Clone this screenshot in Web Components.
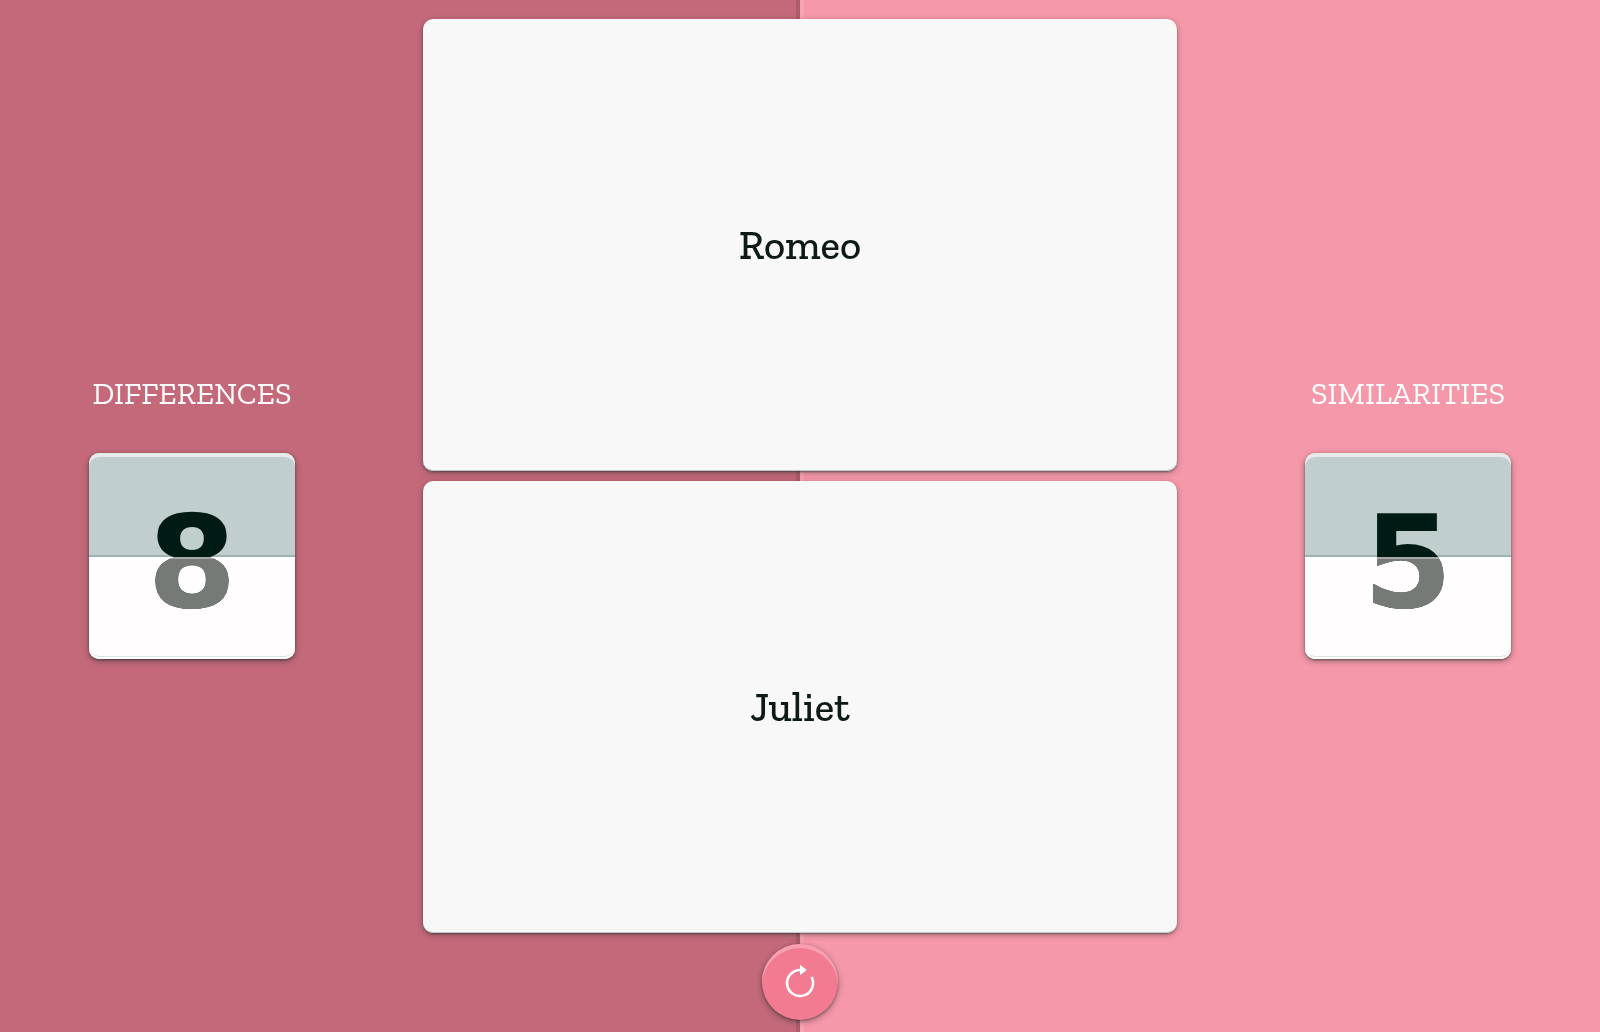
<!DOCTYPE html>
<html lang="en">
<head>
<meta charset="utf-8">
<meta name="viewport" content="width=device-width, initial-scale=1">
<title>Differences and similarities</title>
<style>
html, body { height: 100%; margin: 0; }
body { font-family: "Zilla Slab", "DejaVu Serif Condensed", "DejaVu Serif", serif; }
</style>
</head>
<body>
<compare-board>
  <tally-counter slot="left" label="DIFFERENCES" value="8"></tally-counter>
  <topic-card>Romeo</topic-card>
  <topic-card>Juliet</topic-card>
  <reset-button></reset-button>
  <tally-counter slot="right" label="SIMILARITIES" value="5"></tally-counter>
</compare-board>
<script>
class CompareBoard extends HTMLElement {
  constructor() {
    super();
    this.attachShadow({ mode: "open" }).innerHTML = `
      <style>
        :host {
          display: grid;
          grid-template-columns: 24% minmax(0, 1fr) 24%;
          min-height: 100vh;
          background: linear-gradient(to right,
            #c3697a calc(50% - 4px), #ad5d6e calc(50% - 4px) 50%,
            #f7a3b1 50% calc(50% + 4px), #f598a9 calc(50% + 4px));
        }
        .side { display: flex; flex-direction: column; justify-content: center; align-items: center; }
        main {
          display: flex; flex-direction: column; align-items: center; gap: 10px;
          box-sizing: border-box; padding: 19px 39px 12px;
        }
      </style>
      <section class="side"><slot name="left"></slot></section>
      <main><slot></slot></main>
      <section class="side"><slot name="right"></slot></section>`;
  }
}

class TopicCard extends HTMLElement {
  constructor() {
    super();
    this.attachShadow({ mode: "open" }).innerHTML = `
      <style>
        :host {
          display: flex; flex: 1; align-self: stretch; align-items: center; justify-content: center;
          border-radius: 10px; background: #f8f8f8;
          box-shadow: inset 0 -1px #bccbca, 0 1px 2px rgba(0, 26, 20, .4), 0 2px 6px rgba(0, 26, 20, .3);
        }
        h2 { margin: 0; font-size: 41px; line-height: 48px; font-weight: 500; color: #0d1a16; }
      </style>
      <h2><slot></slot></h2>`;
  }
}

class TallyCounter extends HTMLElement {
  constructor() {
    super();
    this.attachShadow({ mode: "open" }).innerHTML = `
      <style>
        :host { display: flex; flex-direction: column; align-items: center; gap: 38px; }
        label { font-size: 31px; line-height: 42px; font-weight: 400; color: #fff; }
        button {
          display: grid; width: 206px; height: 206px; padding: 0; border: 0; border-radius: 10px;
          overflow: hidden; cursor: pointer; background: linear-gradient(#e6eaea 50%, #fff 50%);
          box-shadow: 0 1px 2px rgba(0, 26, 20, .4), 0 2px 6px rgba(0, 26, 20, .4);
        }
        .value, .flap { grid-area: 1 / 1; }
        .value {
          box-sizing: border-box; height: 206px; padding-top: 14px; border-radius: 10px;
          background: linear-gradient(#c0cecd 102px, #9fb3b2 102px 104px, #fffdfe 104px);
          box-shadow: inset 0 4px #e6eaea, inset 0 -2px #fff, inset 0 -3px #dfe7e6;
          font: 700 128px/192px Verdana, "DejaVu Sans", sans-serif; color: #001a14;
        }
        /* lighten leaves the white half as it is and fades only the digit */
        .flap {
          align-self: end; height: 102px; mix-blend-mode: lighten;
          background: linear-gradient(#aaa5a6 2px, #757a76 2px);
        }
      </style>
      <label for="count"></label>
      <button id="count" type="button"><span class="value"></span><span class="flap"></span></button>`;
  }
  connectedCallback() {
    this.shadowRoot.querySelector("label").textContent = this.getAttribute("label");
    this.shadowRoot.querySelector(".value").textContent = this.getAttribute("value");
  }
}

class ResetButton extends HTMLElement {
  constructor() {
    super();
    this.attachShadow({ mode: "open" }).innerHTML = `
      <style>
        :host { display: block; padding-top: 1px; }
        button {
          display: grid; place-items: center; width: 76px; height: 76px; padding: 0; border: 0;
          border-radius: 50%; background: #f37b91; cursor: pointer;
          box-shadow: inset 0 4px #f8a0b0, 0 1px 2px rgba(0, 26, 20, .3), 0 2px 6px rgba(0, 26, 20, .4);
        }
        svg { display: block; width: 40px; height: 40px; }
      </style>
      <button type="button" aria-label="Reset">
        <svg viewBox="0 0 40 40" aria-hidden="true">
          <path d="M31.6 15A13 13 0 1 1 20.5 8" fill="none" stroke="#fff" stroke-width="2.6"/>
          <path d="M20 2.700v10.500l6.900-5.200z" fill="#fff"/>
        </svg>
      </button>`;
  }
}

customElements.define("compare-board", CompareBoard);
customElements.define("topic-card", TopicCard);
customElements.define("tally-counter", TallyCounter);
customElements.define("reset-button", ResetButton);
</script>
</body>
</html>
